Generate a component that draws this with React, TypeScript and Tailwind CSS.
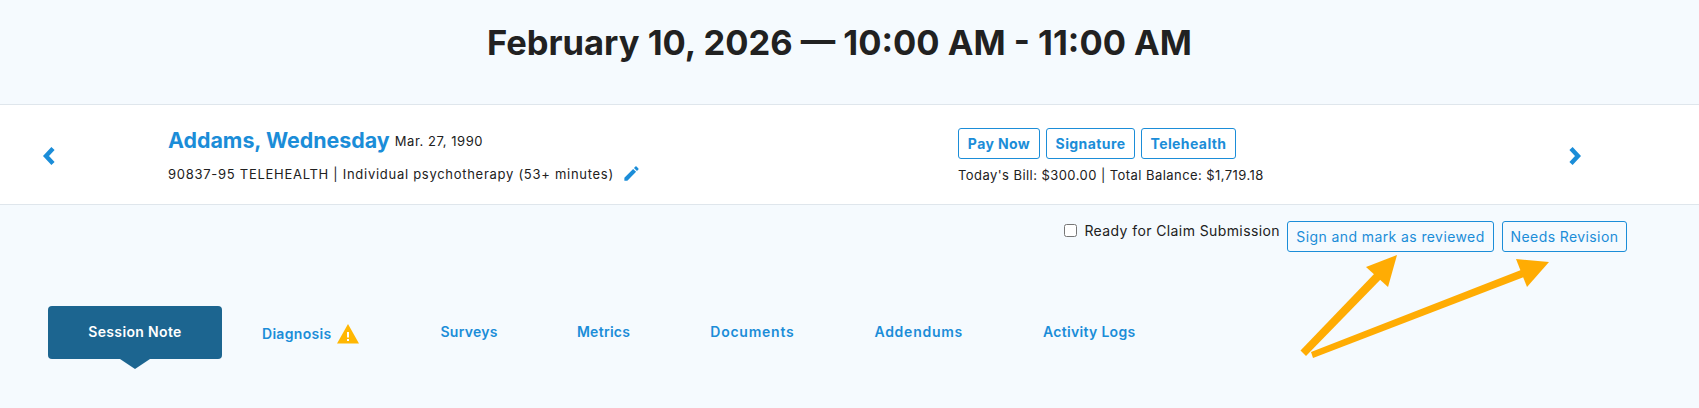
import React from "react";

function Chevron({ right }: { right?: boolean }) {
  return (
    <svg width="14" height="20" viewBox="0 0 14 20" className="shrink-0 mt-[2px]">
      <path d={right ? "M3 2.5 L10 10 L3 17.5" : "M11 2.5 L4 10 L11 17.5"} fill="none" stroke="#1b8dd8" strokeWidth="4.4" />
    </svg>
  );
}

function Tab({ label, cls }: { label: string; cls: string }) {
  return <a className={`text-[14px] font-semibold text-[#1b8dd8] whitespace-nowrap ${cls}`}>{label}</a>;
}

const outlineBold = "h-[31px] shrink-0 rounded-[3px] border border-[#1b8dd8] bg-white text-[14px] font-bold tracking-[0.4px] text-[#1b8dd8]";
const outlineThin = "h-[31px] shrink-0 rounded-[3px] border border-[#1b8dd8] text-[14px] tracking-[0.4px] text-[#1b8dd8]";

export default function App() {
  return (
    <div className="relative w-[1699px] h-[408px] overflow-hidden bg-[#f5fafe] font-['Inter',sans-serif] text-[#212121]">
      <header className="h-[104px] flex justify-center pt-[20px] pr-[20px]">
        <h1 className="text-[34.5px] leading-[46px] font-bold text-[#212121]">February 10, 2026 — 10:00 AM - 11:00 AM</h1>
      </header>

      <section className="h-[101px] bg-white border-y border-[#dfe6ec] flex items-center pl-[42px]">
        <Chevron />
        <div className="ml-[112px] w-[790px] shrink-0 flex flex-col self-start pt-[19px]">
          <div className="flex items-baseline gap-[5px] h-[30px]">
            <span className="text-[21.4px] font-bold text-[#1b8dd8]">Addams, Wednesday</span>
            <span className="text-[13px] tracking-[0.55px] relative -top-[2px]">Mar. 27, 1990</span>
          </div>
          <div className="flex items-center mt-[9px] h-[24px]">
            <span className="text-[13px] tracking-[0.72px]">90837-95 TELEHEALTH | Individual psychotherapy (53+ minutes)</span>
            <svg width="19" height="19" viewBox="0 0 24 24" className="ml-[8px] -mt-[3px]" fill="#1b8dd8">
              <path d="M3 17.25V21h3.75L17.81 9.94l-3.75-3.75L3 17.25zM20.71 7.04a1 1 0 0 0 0-1.41l-2.34-2.34a1 1 0 0 0-1.41 0l-1.83 1.83 3.75 3.75 1.83-1.83z" />
            </svg>
          </div>
        </div>
        <div className="flex flex-col w-[610px] shrink-0 pt-[3px]">
          <div className="flex gap-[6px]">
            <button className={`${outlineBold} w-[82px]`}>Pay Now</button>
            <button className={`${outlineBold} w-[89px]`}>Signature</button>
            <button className={`${outlineBold} w-[95px]`}>Telehealth</button>
          </div>
          <div className="mt-[6px] text-[13px] tracking-[0.44px] leading-[20px]">Today's Bill: $300.00 | Total Balance: $1,719.18</div>
        </div>
        <Chevron right />
      </section>

      <div className="flex justify-end items-start pr-[72px] pt-[16px] h-[57px]">
        <label className="flex items-center gap-[7px] h-[17px] mt-[1px] mr-[7px]">
          <input type="checkbox" className="w-[13px] h-[13px]" />
          <span className="text-[14px] tracking-[0.4px]">Ready for Claim Submission</span>
        </label>
        <button className={`${outlineThin} w-[207px] pb-[1px]`}>Sign and mark as reviewed</button>
        <button className={`${outlineThin} w-[125px] ml-[8px] pb-[1px]`}>Needs Revision</button>
      </div>

      <nav className="flex items-center ml-[48px] mt-[44px] h-[53px]">
        <div className="relative shrink-0 w-[174px] h-[53px] rounded-[4px] bg-[#1c6590] flex items-center justify-center text-[14px] font-semibold tracking-[0.35px] text-white pb-[3px]">
          Session Note
          <span className="absolute left-[72px] top-[53px] w-0 h-0 border-x-[15px] border-x-transparent border-t-[10px] border-t-[#1c6590]" />
        </div>
        <div className="flex items-center ml-[40px] mt-[2px]">
          <Tab label="Diagnosis" cls="tracking-[0.3px]" />
          <svg width="22" height="20" viewBox="0 0 22 20" className="ml-[6px]">
            <path d="M11 0 L22 19.5 H0 Z" fill="#ffb703" />
            <rect x="10" y="8" width="2" height="5.5" fill="#fff" />
            <rect x="10" y="15" width="2" height="2" fill="#fff" />
          </svg>
        </div>
        <Tab label="Surveys" cls="ml-[81px] -mt-[2px] tracking-[0.3px]" />
        <Tab label="Metrics" cls="ml-[79px] -mt-[2px] tracking-[0.3px]" />
        <Tab label="Documents" cls="ml-[80px] -mt-[2px] tracking-[0.75px]" />
        <Tab label="Addendums" cls="ml-[80px] -mt-[2px] tracking-[0.75px]" />
        <Tab label="Activity Logs" cls="ml-[80px] -mt-[2px] tracking-[0.3px]" />
      </nav>

      <svg className="absolute left-0 top-0 pointer-events-none" width="1699" height="408">
        <g fill="#ffac03" stroke="none">
          <polygon points="1300.5,350.5 1376,272 1382,278 1306,356" />
          <polygon points="1397,255 1366,267 1388,287" />
          <polygon points="1311,352 1521,270 1524,277 1313,358" />
          <polygon points="1549,262 1516,259 1527,287" />
        </g>
      </svg>
    </div>
  );
}
